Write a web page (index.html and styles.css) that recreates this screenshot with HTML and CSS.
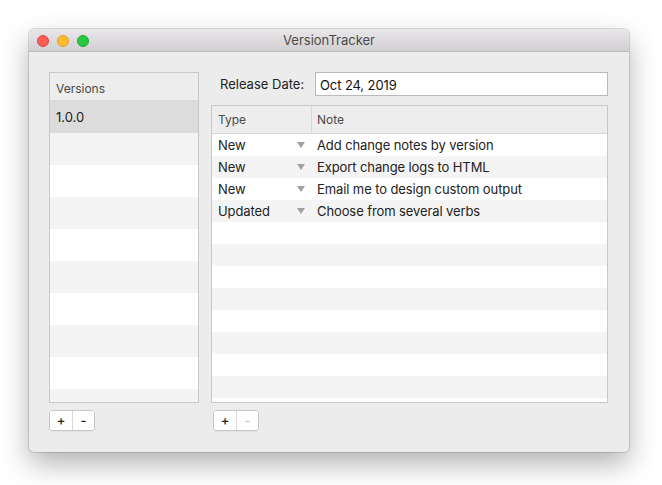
FILE: index.html
```html
<!DOCTYPE html>
<html lang="en">
<head>
    <meta charset="UTF-8">
    <title>VersionTracker</title>
    <link rel="stylesheet" href="styles.css">
</head>
<body>

    <div class="window">
        <div class="titlebar">
            <div class="lights">
                <span class="light red"></span>
                <span class="light yellow"></span>
                <span class="light green"></span>
            </div>
            <div class="title">VersionTracker</div>
        </div>

        <div class="content">
            <div class="panels">
                <div class="versions">
                    <div class="list-header">Versions</div>
                    <div class="version-row selected">1.0.0</div>
                    <div class="version-row"></div>
                    <div class="version-row"></div>
                    <div class="version-row"></div>
                    <div class="version-row"></div>
                    <div class="version-row"></div>
                    <div class="version-row"></div>
                    <div class="version-row"></div>
                    <div class="version-row"></div>
                    <div class="version-row"></div>
                </div>

                <div class="details">
                    <div class="release-row">
                        <label for="releaseDate">Release Date:</label>
                        <input type="text" id="releaseDate" value="Oct 24, 2019">
                    </div>

                    <div class="notes">
                        <div class="notes-row notes-head">
                            <div class="col-type">Type</div>
                            <div class="col-note">Note</div>
                        </div>
                        <div class="notes-row">
                            <div class="col-type">New <span class="arrow"></span></div>
                            <div class="col-note">Add change notes by version</div>
                        </div>
                        <div class="notes-row">
                            <div class="col-type">New <span class="arrow"></span></div>
                            <div class="col-note">Export change logs to HTML</div>
                        </div>
                        <div class="notes-row">
                            <div class="col-type">New <span class="arrow"></span></div>
                            <div class="col-note">Email me to design custom output</div>
                        </div>
                        <div class="notes-row">
                            <div class="col-type">Updated <span class="arrow"></span></div>
                            <div class="col-note">Choose from several verbs</div>
                        </div>
                        <div class="notes-row"></div>
                        <div class="notes-row"></div>
                        <div class="notes-row"></div>
                        <div class="notes-row"></div>
                        <div class="notes-row"></div>
                        <div class="notes-row"></div>
                        <div class="notes-row"></div>
                        <div class="notes-row"></div>
                        <div class="notes-row"></div>
                    </div>
                </div>
            </div>

            <div class="toolbar">
                <div class="segmented">
                    <button>+</button>
                    <button>-</button>
                </div>
                <div class="segmented">
                    <button>+</button>
                    <button disabled>-</button>
                </div>
            </div>
        </div>
    </div>

</body>
</html>
```

FILE: styles.css
```css
* {
    margin: 0;
    padding: 0;
    box-sizing: border-box;
    font-family: "Inter", "Liberation Sans", Arial, sans-serif;
}

body {
    background-color: #ffffff;
    width: 662px;
    height: 485px;
    overflow: hidden;
    padding: 29px 0 0 29px;
}

.window {
    width: 600px;
    height: 423px;
    background: #ececec;
    border-radius: 5px;
    box-shadow: 0 0 0 1px rgba(0, 0, 0, 0.12), 0 12px 28px rgba(0, 0, 0, 0.3);
    overflow: hidden;
    display: flex;
    flex-direction: column;
}

.titlebar {
    height: 23px;
    flex-shrink: 0;
    background: linear-gradient(#e9e7e9, #d2d0d2);
    border-bottom: 1px solid #bcbcbc;
    position: relative;
    display: flex;
    align-items: center;
    justify-content: center;
}

.lights {
    position: absolute;
    left: 8px;
    top: 6px;
    display: flex;
    gap: 8px;
}

.light {
    width: 12px;
    height: 12px;
    border-radius: 50%;
}

.red {
    background: #fd5f57;
    border: 1px solid #e1473f;
}

.yellow {
    background: #fdbc2e;
    border: 1px solid #e0a028;
}

.green {
    background: #28c840;
    border: 1px solid #1eab2f;
}

.title {
    font-size: 13px;
    color: #4b4b4b;
}

.content {
    flex: 1;
    padding: 20px 20px 0 20px;
    display: flex;
    flex-direction: column;
}

.panels {
    display: flex;
    gap: 12px;
    height: 331px;
}

.versions {
    width: 150px;
    border: 1px solid #c8c8c8;
    background: #fff;
    overflow: hidden;
}

.list-header {
    height: 28px;
    background: #ededed;
    border-bottom: 1px solid #d8d8d8;
    font-size: 12px;
    color: #4a4a4a;
    padding: 8px 0 0 6px;
}

.version-row {
    height: 32px;
    font-size: 13px;
    color: #222;
    padding: 8px 0 0 6px;
}

.version-row:nth-child(odd) {
    background: #f4f4f4;
}

.version-row.selected {
    background: #dcdcdc;
}

.details {
    width: 397px;
    display: flex;
    flex-direction: column;
}

.release-row {
    display: flex;
    align-items: center;
    height: 24px;
    margin-bottom: 9px;
}

.release-row label {
    font-size: 13px;
    color: #222;
    width: 104px;
    padding-left: 9px;
}

.release-row input {
    flex: 1;
    height: 24px;
    border: 1px solid #b9b9b9;
    background: #fff;
    font-size: 13px;
    color: #111;
    padding: 2px 4px 0;
    outline: none;
    letter-spacing: -0.1px;
}

.notes {
    flex: 1;
    border: 1px solid #c8c8c8;
    background: #fff;
    overflow: hidden;
}

.notes-row {
    height: 22px;
    display: flex;
    align-items: center;
    font-size: 13px;
    color: #222;
    letter-spacing: -0.1px;
}

.notes-row:nth-child(odd) {
    background: #f4f4f4;
}

.notes-row.notes-head {
    height: 28px;
    background: #ededed;
    border-bottom: 1px solid #d8d8d8;
    font-size: 12px;
    color: #4a4a4a;
    align-items: stretch;
    letter-spacing: 0;
}

.notes-head .col-type {
    border-right: 1px solid #d8d8d8;
}

.col-type {
    width: 100px;
    padding-left: 6px;
    display: flex;
    align-items: center;
    position: relative;
}

.col-note {
    padding-left: 5px;
    display: flex;
    align-items: center;
}

.arrow {
    position: absolute;
    left: 85px;
    top: 50%;
    margin-top: -3px;
    width: 0;
    height: 0;
    border-left: 4px solid transparent;
    border-right: 4px solid transparent;
    border-top: 6px solid #a0a0a0;
}

.toolbar {
    display: flex;
    gap: 118px;
    margin-top: 7px;
}

.segmented {
    display: flex;
    background: #fff;
    border: 1px solid #c6c6c6;
    border-radius: 4px;
    height: 21px;
    overflow: hidden;
    box-shadow: 0 1px 0 rgba(0, 0, 0, 0.04);
}

.segmented button {
    width: 22px;
    border: none;
    background: #fff;
    font-size: 13px;
    font-weight: 500;
    color: #222;
    line-height: 19px;
}

.segmented button + button {
    border-left: 1px solid #dadada;
}

.segmented button:disabled {
    color: #c8c8c8;
}
```
